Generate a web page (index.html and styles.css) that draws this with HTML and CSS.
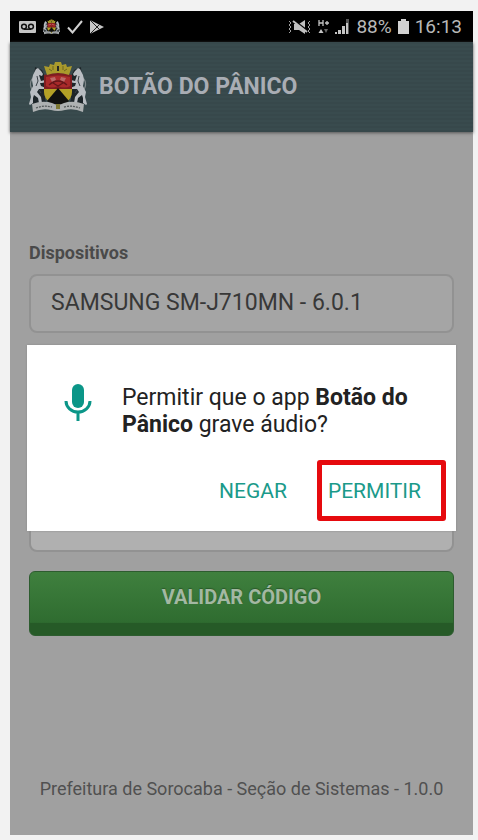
FILE: index.html
```html
<!DOCTYPE html>
<html lang="pt-BR">
<head>
<meta charset="utf-8">
<meta name="viewport" content="width=device-width, initial-scale=1">
<title>Botão do Pânico</title>
<link rel="stylesheet" href="styles.css">
</head>
<body>
<svg width="0" height="0" class="defs" aria-hidden="true">
  <symbol id="crest" viewBox="0 0 58 53">
    <g id="goat">
      <path fill="none" stroke="#7f878a" stroke-width="1.2" stroke-linecap="round" d="M5 30C1 28 0 21 4 17"/>
      <path fill="#1d2529" d="M6 6l7 3 4 9-1 20 2 6-15 1 0-16 2-12z"/>
      <path fill="#b9bdc2" d="M7 8l2-1 3 3 2 3-1 2-3-1 2 6 4-1 1 2-4 1-2 0 1 3 5 2v1l-7 0-2 3 4 5 1 6-3 0-1-5-4-3-1 3 0 5-3 2-1-1 2-7-1-5 3-6-1-6 1-5z"/>
      <path fill="none" stroke="#394046" d="M8 15l1 5-2 5M10 29l2 3"/>
    </g>
    <use href="#goat" transform="matrix(-1 0 0 1 58 0)"/>
    <path fill="#7f1d20" d="M15 14q14-4 28 0v15H15z"/>
    <path fill="#b4a126" d="M15 28h28v3q0 7-7 11H22q-7-4-7-11z"/>
    <path fill="#11110f" d="M29 27l11 13-6 4H24l-6-4z"/>
    <path fill="#a92a2a" d="M17 16q12-3 24 0v9q-5 3-12 0-7 3-12 0z"/>
    <path fill="#bb6a68" d="M21 17l5-1 1 3-4 2zM37 17l-5-1-1 3 4 2z"/>
    <path fill="none" stroke="#651719" stroke-width="1.2" d="M20 24q9-8 18 0M24 22l5 3 5-3"/>
    <path fill="#aa9a2c" d="M18 14l-3-9 5 1 1-3 4 1 1-3h6l1 3 4-1 1 3 5-1-3 9q-11-4-22 0z"/>
    <path fill="none" stroke="#6f6720" d="M20 8l3 2M24 5v4M34 5v4M38 8l-3 2"/>
    <path fill="#292923" d="M28 5h2v5h-2z"/>
    <path fill="#aeb1b2" d="M3 43q11-4 20-1 6 3 12 0 9-3 20 1l-1 8q-9-4-18-2-7 2-14 0-9-2-18 2z"/>
    <path fill="none" stroke="#565b5c" stroke-width="1.3" stroke-dasharray="2 1" d="M7 47q8-3 16-1M35 46q8-2 16 1"/>
    <path fill="#7f7934" d="M27 43h4v5h-4z"/>
  </symbol>
</svg>
<div class="phone">
  <div class="status">
    <div class="status-group">
      <svg class="ico-voicemail" viewBox="0 0 17 12"><rect width="17" height="12" rx="1" fill="#c4c4c4"/><g fill="none" stroke="#111" stroke-width="1.5"><circle cx="5" cy="5.6" r="2.4"/><circle cx="12" cy="5.6" r="2.4"/><path d="M5 8.2h7"/></g></svg>
      <svg class="ico-crest"><use href="#crest"/></svg>
      <svg class="ico-check" viewBox="0 0 16 14"><path d="M1 7.500l4.500 5L15 1" fill="none" stroke="#d0d0d0" stroke-width="2"/></svg>
      <svg class="ico-play" viewBox="0 0 14 14"><path d="M0 0l14 7L0 14z" fill="#c6c6c6"/><path d="M0 0l10 10M0 14L10 4" stroke="#222" stroke-width="1"/></svg>
    </div>
    <div class="status-group status-right">
      <svg class="ico-mute" viewBox="0 0 24 16"><path d="M6 5h5l6-4v14l-6-4H6z" fill="#c0c0c0"/><path d="M4 0l17 13" stroke="#000" stroke-width="2"/><path d="M5 2l14 11" stroke="#c0c0c0" stroke-width="2"/><path d="M1 2l2 2-2 2 2 2-2 2 2 2-2 2M22 2l-2 2 2 2-2 2 2 2-2 2 2 2" fill="none" stroke="#a0a0a0"/></svg>
      <svg class="ico-data" viewBox="0 0 11 14"><path d="M1 0v6M5 0v6M1 3h4M7 3h4M9 1v4" stroke="#c4c4c4" stroke-width="1.300"/><path d="M3 9l2.500 4h-5z" fill="#c4c4c4"/><path d="M6 9h4l-2 4z" fill="#666"/></svg>
      <svg class="ico-signal" viewBox="0 0 15 15"><path d="M0 13h2v2H0zM3 11h3v4H3zM7 7h3v8H7z" fill="#c4c4c4"/><path d="M11 0h3v15h-3z" fill="#555"/><path d="M11 4h2v11h-2z" fill="#c4c4c4"/></svg>
      <span>88%</span>
      <svg class="ico-battery" viewBox="0 0 11 15"><path d="M3 0h5v2h3v13H0V2h3z" fill="#d2d2d2"/></svg>
      <span>16:13</span>
    </div>
  </div>
  <div class="screen">
    <header class="app-bar">
      <svg class="logo" role="img" aria-label="Brasão de Sorocaba"><use href="#crest"/></svg>
      <h1>BOTÃO DO PÂNICO</h1>
    </header>
    <main>
      <form>
        <label for="device">Dispositivos</label>
        <input id="device" type="text" value="SAMSUNG SM-J710MN - 6.0.1" readonly>
        <input class="code" type="text" aria-label="Código">
        <button class="validate" type="button">VALIDAR CÓDIGO</button>
      </form>
    </main>
    <footer>Prefeitura de Sorocaba - Seção de Sistemas - 1.0.0</footer>
    <div class="overlay">
      <div class="dialog" role="dialog" aria-labelledby="question">
        <div class="message">
          <svg class="mic" viewBox="0 0 28 38"><rect x="8" y="0" width="12" height="24" rx="6" fill="#0b9688"/><path d="M2 17a12 11 0 0 0 24 0M14 28v9" fill="none" stroke="#0b9688" stroke-width="3"/></svg>
          <p id="question">Permitir que o app <b>Botão do Pânico</b> grave áudio?</p>
        </div>
        <div class="actions">
          <button type="button">NEGAR</button>
          <button type="button" class="allow">PERMITIR</button>
        </div>
      </div>
    </div>
  </div>
</div>
</body>
</html>
```
FILE: styles.css
```css
* { box-sizing: border-box; }
body {
  margin: 0;
  padding: 11px 5px 5px 10px;
  min-height: 100vh;
  display: flex;
  background: #f2f2f2;
  font-family: Roboto, "Liberation Sans", sans-serif;
}
.defs { position: absolute; }
svg { display: block; flex: none; }
button, input { font: inherit; margin: 0; }

.phone { flex: 1; display: flex; flex-direction: column; background: #a0a0a0; }
.status {
  height: 31px;
  padding: 0 11px 0 9px;
  display: flex;
  justify-content: space-between;
  align-items: center;
  background: #000;
  color: #b8b8b8;
  font-size: 19px;
}
.status-group { display: flex; align-items: center; gap: 7px; }
.status-right { gap: 6px; }
.ico-voicemail { width: 17px; height: 12px; }
.ico-crest { width: 17px; height: 16px; }
.ico-check { width: 16px; height: 14px; }
.ico-play { width: 14px; height: 14px; }
.ico-mute { width: 24px; height: 16px; }
.ico-data { width: 11px; height: 14px; }
.ico-signal { width: 15px; height: 15px; }
.ico-battery { width: 11px; height: 15px; }

.screen { position: relative; flex: 1; display: flex; flex-direction: column; }
.app-bar {
  height: 90px;
  padding: 0 19px;
  display: flex;
  align-items: center;
  gap: 12px;
  background: repeating-linear-gradient(#37484b 0 2px, #394b4e 2px 4px);
  box-shadow: 0 1px 3px #555;
}
.logo { width: 58px; height: 53px; }
h1 { margin: 0; font-size: 23px; line-height: 28px; color: #a9adb4; }

main { flex: 1; padding: 110px 19px 0; }
form { display: flex; flex-direction: column; }
label { margin-bottom: 10px; font-size: 18px; line-height: 22px; font-weight: bold; color: #4a4a4a; }
input {
  width: 100%;
  height: 59px;
  padding: 0 20px 2px;
  border: 2px solid #929292;
  border-radius: 8px;
  background: #a5a5a5;
  color: #383838;
  font-size: 23px;
}
.code { margin-top: 160px; background: #b0b0b0; }
.validate {
  height: 65px;
  margin-top: 19px;
  padding: 0 0 14px;
  border: 1px solid #2d5c2f;
  border-radius: 6px;
  background: linear-gradient(#3f803e, #2f6c30 80%, #265a27 81%);
  color: #a3b8a2;
  font-size: 20px;
  font-weight: bold;
  text-shadow: 0 -1px 1px #2a5a2b;
}
footer { padding: 0 16px 35px; text-align: center; font-size: 18px; line-height: 22px; color: #505050; }

.overlay { position: absolute; inset: 0; padding: 0 17px 2px; display: flex; align-items: center; }
.dialog { flex: 1; padding: 39px 35px 20px 37px; background: #fff; color: #222; box-shadow: 0 0 2px #888; }
.message { display: flex; align-items: flex-start; gap: 30px; }
.mic { width: 28px; height: 38px; }
.message p { margin: 0; font-size: 23px; line-height: 27px; }
.actions { display: flex; justify-content: flex-end; gap: 41px; margin-top: 33px; }
.actions button {
  position: relative;
  height: 40px;
  padding: 0;
  border: 0;
  background: none;
  color: #1b9a8a;
  font-size: 21px;
}
.allow::after {
  content: "";
  position: absolute;
  inset: -11px -25px -10px -11px;
  border: 5px solid #e60a0e;
  border-radius: 3px;
}
```
